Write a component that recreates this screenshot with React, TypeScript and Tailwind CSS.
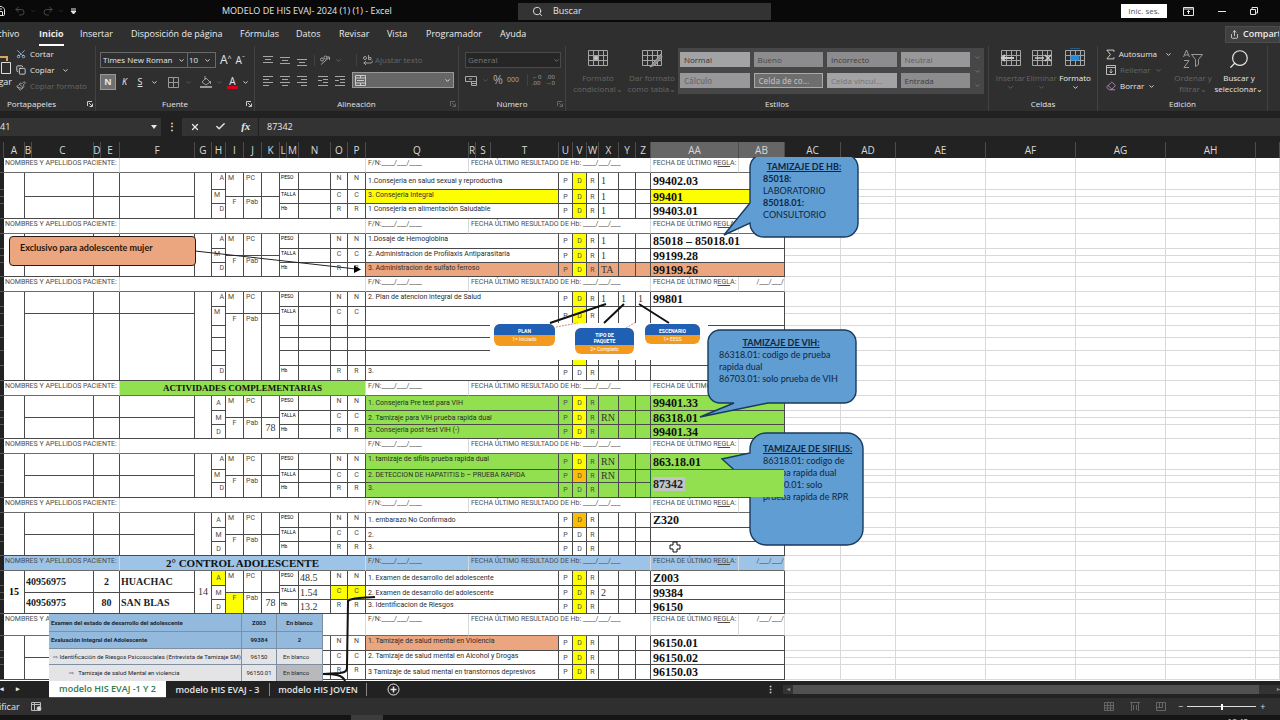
import type { ReactNode } from "react";
import { ChevronDown, Copy, Eraser, Paintbrush, Redo2, Scissors, Search, Share, Undo2, X, Check, Save } from "lucide-react";

type Line = {
  span: number;
  text?: string;
  top?: boolean;
  bg?: string;
  textBg?: string;
  pdr?: boolean;
  dBg?: string;
  x?: string;
  y?: string;
  z?: string;
  code?: string;
  amd?: string;
  measure?: string;
  value?: string;
  ncr?: string;
  amdBg?: string;
  ncrBg?: string;
};

type Block = {
  head: number;
  title?: string;
  titleBg?: string;
  headBg?: string;
  regla?: boolean;
  loose?: boolean;
  heights: number[];
  split: [number, number];
  lines: Line[];
  no?: string;
  age?: string;
  dni?: string[];
  num?: string[];
  name?: string[];
  pab?: string;
  sexBg?: string;
};

const YELLOW = "bg-[#fdff00]";
const GREEN = "bg-[#92df50]";
const PEACH = "bg-[#eba67f]";
const BLUE = "bg-[#9dc3e6]";
const ORANGE = "bg-[#fbbd08]";

const AMD = [
  { amd: "A", measure: "PESO", ncr: "N" },
  { amd: "M", measure: "TALLA", ncr: "C" },
  { amd: "D", measure: "Hb", ncr: "R" },
];

const three = (lines: Omit<Line, "span">[]): Line[] =>
  lines.map((l, i) => ({ span: i === 1 ? 2 : 1, pdr: true, dBg: YELLOW, ...AMD[i], ...l }));

const BLOCKS: Block[] = [
  {
    head: 15, loose: true, heights: [17, 7, 7, 15], split: [2, 2],
    lines: three([
      { text: "1.Consejeria en salud sexual y reproductiva", x: "1", code: "99402.03" },
      { text: "3. Consejeria Integral", top: true, textBg: YELLOW, x: "1", code: "99401" },
      { text: "1 Consejeria en alimentación Saludable", top: true, x: "1", code: "99403.01" },
    ]),
  },
  {
    head: 15, loose: true, heights: [15, 7, 7, 14], split: [2, 2],
    lines: three([
      { text: "1.Dosaje de Hemoglobina", top: true, x: "1", code: "85018 – 85018.01" },
      { text: "2. Administracion de Profilaxis Antiparasitaria", top: true, x: "1", code: "99199.28" },
      { text: "3. Administracion de sulfato ferroso", top: true, bg: PEACH, x: "TA", code: "99199.26" },
    ]),
  },
  {
    head: 15, loose: true, regla: true, heights: [15, 7, 12, 12, 13, 15, 15], split: [2, 5],
    lines: [
      { span: 1, ...AMD[0], text: "2. Plan de atencion integral de Salud", top: true, pdr: true, dBg: YELLOW, x: "1", y: "1", z: "1", code: "99801" },
      { span: 2, ...AMD[1], pdr: true, dBg: YELLOW },
      { span: 1, dBg: YELLOW },
      { span: 1, dBg: YELLOW },
      { span: 1, dBg: YELLOW },
      { span: 1, ...AMD[2], text: "3.", top: true, pdr: true },
    ],
  },
  {
    head: 15, title: "ACTIVIDADES COMPLEMENTARIAS", titleBg: GREEN, heights: [15, 7, 7, 14], split: [2, 2], pab: "78",
    lines: three([
      { text: "1. Consejeria Pre test para VIH", bg: GREEN, code: "99401.33" },
      { text: "2. Tamizaje para VIH prueba rapida dual", bg: GREEN, x: "RN", code: "86318.01" },
      { text: "3. Consejeria post test VIH (-)", top: true, bg: GREEN, code: "99401.34" },
    ]),
  },
  {
    head: 15, loose: true, heights: [16, 6, 7, 15], split: [2, 2],
    lines: three([
      { text: "1. tamizaje de sifilis prueba rapida dual", top: true, bg: GREEN, x: "RN", code: "863.18.01" },
      { text: "2. DETECCION DE HAPATITIS b – PRUEBA RAPIDA", top: true, bg: GREEN, dBg: ORANGE, x: "RN" },
      { text: "3.", top: true, bg: GREEN, dBg: GREEN },
    ]),
  },
  {
    head: 15, heights: [15, 7, 7, 14], split: [2, 2],
    lines: three([
      { text: "1. embarazo No Confirmado", dBg: ORANGE, code: "Z320" },
      { text: "2.", dBg: "" },
      { text: "3.", top: true, dBg: "" },
    ]),
  },
  {
    head: 15, title: "2° CONTROL ADOLESCENTE", headBg: BLUE, regla: true, heights: [15, 7, 7, 14], split: [2, 2],
    no: "15", age: "14", dni: ["40956975", "40956975"], num: ["2", "80"], name: ["HUACHAC", "SAN BLAS"], pab: "78", sexBg: YELLOW,
    lines: three([
      { text: "1. Examen de desarrollo del adolescente", value: "48.5", amdBg: YELLOW, code: "Z003" },
      { text: "2. Examen de desarrollo del adolescente", value: "1.54", ncrBg: YELLOW, x: "2", code: "99384" },
      { text: "3. Identificacion de Riesgos", top: true, value: "13.2", code: "96150" },
    ]),
  },
  {
    head: 22, loose: true, regla: true, heights: [15, 7, 7, 15], split: [2, 2],
    lines: three([
      { text: "1. Tamizaje de salud mental en Violencia", top: true, textBg: PEACH, code: "96150.01" },
      { text: "2. Tamizaje de salud mental en Alcohol y Drogas", top: true, code: "96150.02" },
      { text: "3 Tamizaje de salud mental en transtornos depresivos", code: "96150.03" },
    ]),
  },
];

const COLS: [string, string][] = [
  ["", "w-[4px]"], ["A", "w-[21px]"], ["B", "w-[7px]"], ["C", "w-[62px]"], ["D", "w-[7px]"], ["E", "w-[19px]"],
  ["F", "w-[75px]"], ["G", "w-[17px]"], ["H", "w-[14px]"], ["I", "w-[18px]"], ["J", "w-[18px]"], ["K", "w-[18px]"],
  ["L", "w-[7px]"], ["M", "w-[12px]"], ["N", "w-[32px]"], ["O", "w-[17px]"], ["P", "w-[18px]"], ["Q", "w-[103px]"],
  ["R", "w-[7px]"], ["S", "w-[15px]"], ["T", "w-[68px]"], ["U", "w-[14px]"], ["V", "w-[14px]"], ["W", "w-[12px]"],
  ["X", "w-[20px]"], ["Y", "w-[17px]"], ["Z", "w-[15px]"], ["AA", "w-[88px]"], ["AB", "w-[46px]"], ["AC", "w-[56px]"],
  ["AD", "w-[55px]"], ["AE", "w-[90px]"], ["AF", "w-[90px]"], ["AG", "w-[90px]"], ["AH", "w-[90px]"], ["", ""],
];

const CELL = "border-r border-b border-[#4a4a4a] p-0 overflow-hidden whitespace-nowrap";
const SOFT = "border-b border-b-[#6b6b6b] border-r border-r-[#d9d9d9] p-0 overflow-hidden whitespace-nowrap align-top text-[7px] leading-[10px]";
const TINY = "text-[7px] leading-[10px] text-[#4c4c4c]";
const SERIF = "font-['Liberation_Serif',serif]";

function EmptyCells() {
  return (
    <>
      {["AC", "AD", "AE", "AF", "AG", "AH", "AI"].map((c) => (
        <td key={c} className="border-r border-b border-[#d9d9d9] p-0" />
      ))}
    </>
  );
}

function RowHead() {
  return <td className="border-b border-[#555] bg-[#222] p-0" />;
}

function BlockRows({ b }: { b: Block }) {
  const starts: number[] = [];
  b.lines.reduce((at, l) => {
    starts.push(at);
    return at + l.span;
  }, 0);
  const head = `${SOFT} ${b.headBg ?? ""} text-[#4c4c4c]`;

  return (
    <>
      <tr style={{ height: b.head }}>
        <RowHead />
        <td colSpan={5} className={`${head} pl-px`}>NOMBRES Y APELLIDOS PACIENTE:</td>
        <td colSpan={11} className={`${SOFT} ${b.headBg ?? ""} ${b.titleBg ?? ""} ${SERIF} text-center`}>
          {b.title && <span className={`block font-bold leading-[14px] text-[#111] ${b.headBg ? "text-[11px]" : "text-[9px]"}`}>{b.title}</span>}
        </td>
        <td className={`${head} pl-0.5`}>F/N:____/___/____</td>
        <td colSpan={9} className={`${head} pl-0.5`}>FECHA ÚLTIMO RESULTADO DE Hb: ____/___/___</td>
        <td className={`${head} pl-0.5`}>FECHA DE ÚLTIMO R<u>EGL</u>A:</td>
        <td className={`${head} border-r-[#4a4a4a] text-right`}>{b.regla ? "/___/___/" : ""}</td>
        <EmptyCells />
      </tr>
      {b.heights.map((h, r) => {
        const i = starts.indexOf(r);
        const l = i >= 0 ? b.lines[i] : null;
        const half = r === 0 ? 0 : r === b.split[0] ? 1 : -1;
        const hs = half >= 0 ? b.split[half] : 1;
        const bg = l?.bg ?? "";
        const amdAlign = !b.loose ? "text-center" : l?.amd === "M" ? "pl-0.5 align-top" : "pr-px text-right align-top";
        return (
          <tr key={r} style={{ height: h }}>
            <RowHead />
            {r === 0 && <td rowSpan={b.heights.length} className={`${CELL} ${SERIF} text-center text-[10px] leading-3 font-bold`}>{b.no}</td>}
            {half >= 0 && (
              <>
                <td colSpan={2} rowSpan={hs} className={`${CELL} ${SERIF} pl-px text-[10px] leading-3 font-bold text-[#222]`}>{b.dni?.[half]}</td>
                <td colSpan={2} rowSpan={hs} className={`${CELL} ${SERIF} text-center text-[10px] leading-3 font-bold text-[#222]`}>{b.num?.[half]}</td>
                <td rowSpan={hs} className={`${CELL} ${SERIF} pl-px text-[10px] leading-3 font-bold text-[#222]`}>{b.name?.[half]}</td>
              </>
            )}
            {r === 0 && <td rowSpan={b.heights.length} className={`${CELL} ${SERIF} text-center text-[10px] leading-3 text-[#333]`}>{b.age}</td>}
            {l && <td rowSpan={l.span} className={`${CELL} ${TINY} ${l.amdBg ?? ""} ${amdAlign}`}>{l.amd}</td>}
            {half >= 0 && (
              <>
                <td rowSpan={hs} className={`${CELL} ${TINY} align-top ${half ? `text-center ${b.sexBg ?? ""}` : "pl-0.5"}`}>{half ? "F" : "M"}</td>
                <td rowSpan={hs} className={`${CELL} ${TINY} pl-0.5 align-top`}>{half ? "Pab" : "PC"}</td>
                <td rowSpan={hs} className={`${CELL} ${SERIF} text-center text-[10px] leading-3 text-[#333]`}>{half ? b.pab : ""}</td>
              </>
            )}
            {l && (
              <>
                <td colSpan={2} rowSpan={l.span} className={`${CELL} pl-px align-top text-[5px] leading-[8px]`}>{l.measure}</td>
                <td rowSpan={l.span} className={`${CELL} ${SERIF} pl-px text-[10px] leading-3 text-[#333]`}>{l.value}</td>
                <td rowSpan={l.span} className={`${CELL} ${TINY} ${l.ncrBg ?? ""} text-center align-top`}>{l.ncr}</td>
                <td rowSpan={l.span} className={`${CELL} ${TINY} ${l.ncrBg ?? ""} text-center align-top`}>{l.ncr}</td>
                <td colSpan={4} rowSpan={l.span} className={`${CELL} ${bg} ${l.textBg ?? ""} pl-0.5 text-[7px] leading-[10px] text-[#2c2c2c] ${l.top ? "align-top" : ""}`}>{l.text}</td>
                <td rowSpan={l.span} className={`${CELL} ${TINY} ${bg} text-center`}>{l.pdr ? "P" : ""}</td>
                <td rowSpan={l.span} className={`${CELL} ${TINY} ${l.dBg ?? ""} text-center`}>{l.pdr ? "D" : ""}</td>
                <td rowSpan={l.span} className={`${CELL} ${TINY} ${bg} text-center`}>{l.pdr ? "R" : ""}</td>
                {[l.x, l.y, l.z].map((v, k) => (
                  <td key={k} rowSpan={l.span} className={`${CELL} ${SERIF} ${bg} pl-0.5 text-[10px] leading-3 text-[#333]`}>{v}</td>
                ))}
                <td colSpan={2} rowSpan={l.span} className={`${CELL} ${SERIF} ${bg} ${l.textBg === YELLOW ? YELLOW : ""} pl-0.5 text-[12px] leading-3 font-bold text-[#111]`}>{l.code}</td>
              </>
            )}
            <EmptyCells />
          </tr>
        );
      })}
    </>
  );
}

function Pill({ place, title, note }: { place: string; title: string; note: string }) {
  return (
    <div className={`absolute overflow-hidden rounded-md bg-[#f39a1e] text-center text-[5px] leading-[6px] text-white ${place}`}>
      <div className="bg-[#1f5fb4] px-3 pt-1 pb-px font-bold">{title}</div>
      <div className="pt-px">{note}</div>
    </div>
  );
}

function Overlays() {
  return (
    <div className="absolute inset-x-0 top-[15px] bottom-0 overflow-hidden">
      <svg className="absolute top-0 left-0 h-[524px] w-[1280px]" viewBox="0 157 1280 524" fill="none">
        <path d="M195 251L356 269" stroke="#222" />
        <path d="M354 265.500l7 4-7 3.500z" fill="#000" />
        <rect x="490" y="323" width="218" height="37" fill="#fff" />
        <path d="M606 304l-56 19M624 304l-20 19M639 304l30 19" stroke="#111" strokeWidth="2" />
        <path d="M556 327l22-4M626 328l10-6" stroke="#b55" strokeDasharray="2 1" strokeWidth=".7" />
        <g fill="#5f9dd2" stroke="#173a5e" strokeWidth="1.400">
          <path d="M764 154h80a14 14 0 0 1 14 14v55a14 14 0 0 1-14 14h-80a14 14 0 0 1-14-14L724 235l26-32v-35a14 14 0 0 1 14-14z" />
          <path d="M720 330h124a12 12 0 0 1 12 12v49a12 12 0 0 1-12 12h-76L700 417l34-14h-14a12 12 0 0 1-12-12v-49a12 12 0 0 1 12-12z" />
          <path d="M766 433h81a16 16 0 0 1 16 16v80a16 16 0 0 1-16 16h-81a16 16 0 0 1-16-16v-45L722 459l28-6v-4a16 16 0 0 1 16-16z" />
        </g>
        <path d="M375 597c-10 1-23 0-27 4l-1 66c0 4-1 5-7 6l-17 1c12 0 20 1 22 7" stroke="#111" strokeWidth="2" />
        <path d="M673 542h4v3h3v4h-3v3h-4v-3h-3v-4h3z" fill="#fff" stroke="#111" />
      </svg>

      <div className="absolute top-[79px] left-[9px] h-[30px] w-[187px] rounded border border-[#2a1a12] bg-[#eba67f] px-2.5 pt-1 font-['Lato',sans-serif] text-[9px] leading-[13px] font-bold text-[#2a1508]">
        Exclusivo para adolescente mujer
      </div>

      <Pill place="top-[167px] left-[494px] w-[61px] h-[22px]" title="PLAN" note="1= Iniciado" />
      <Pill place="top-[171px] left-[575px] w-[59px] h-[26px]" title="TIPO DE PAQUETE" note="2= Completo" />
      <Pill place="top-[167px] left-[645px] w-[55px] h-[20px]" title="ESCENARIO" note="1= EESS" />

      <div className="absolute top-1 left-[763px] w-[82px] font-['Lato',sans-serif] text-[9px] leading-3 text-[#10263d]">
        <h3 className="text-center font-bold underline">TAMIZAJE DE HB:</h3>
        <p className="font-bold">85018:</p>
        <p>LABORATORIO</p>
        <p className="font-bold">85018.01:</p>
        <p>CONSULTORIO</p>
      </div>
      <div className="absolute top-[180px] left-[719px] w-[124px] font-['Lato',sans-serif] text-[9px] leading-3 text-[#10263d]">
        <h3 className="text-center font-bold underline">TAMIZAJE DE VIH:</h3>
        <p>86318.01: codigo de prueba</p>
        <p>rapida dual</p>
        <p>86703.01: solo prueba de VIH</p>
      </div>
      <div className="absolute top-[286px] left-[763px] w-[86px] font-['Lato',sans-serif] text-[9px] leading-3 whitespace-nowrap text-[#10263d]">
        <h3 className="text-center font-bold underline">TAMIZAJE DE SIFILIS:</h3>
        <p>86318.01: codigo de</p>
        <p>prueba rapida dual</p>
        <p>86780.01: solo</p>
        <p>prueba rapida de RPR</p>
      </div>

      {/* cell being edited */}
      <div className="absolute top-[312px] left-[650px] flex h-[28px] w-[134px] items-center border-t border-l border-[#1d6f3f] bg-[#92df50] pl-0.5">
        <input aria-label="AA41" defaultValue="87342" className="w-[32px] bg-[#c4c4c4] p-0 font-['Liberation_Serif',serif] text-[12px] leading-[14px] font-bold text-[#222]" />
      </div>

      <table className="absolute top-[457px] left-[49px] w-[274px] table-fixed border-separate border-spacing-0 font-['Roboto',sans-serif] text-[6px] leading-[8px] text-[#1c2733]">
        <colgroup>
          <col className="w-[193px]" />
          <col className="w-[35px]" />
          <col className="w-[46px]" />
        </colgroup>
        <tbody className="[&_td]:border-r [&_td]:border-b [&_td]:border-[#7d8fa3] [&_td]:p-0 [&_td]:whitespace-nowrap">
          <tr className="h-[18px] bg-[#93b9dc] font-bold">
            <td><span className="pl-0.5">Examen del estado de desarrollo del adolescente</span></td>
            <td className="text-center">Z003</td>
            <td className="text-center">En blanco</td>
          </tr>
          <tr className="h-[17px] bg-[#93b9dc] font-bold">
            <td><span className="pl-0.5">Evaluación Integral del Adolescente</span></td>
            <td className="text-center">99384</td>
            <td className="text-center">2</td>
          </tr>
          <tr className="h-[16px] bg-[#e4e4e6]">
            <td><span className="pl-1">⇨ Identificación de Riesgos Psicosociales (Entrevista de Tamizaje SM)</span></td>
            <td className="text-center">96150</td>
            <td><span className="pl-1.5">En blanco</span></td>
          </tr>
          <tr className="h-[17px] bg-[#e4e4e6]">
            <td><span className="pl-5">⇨ &nbsp; Tamizaje de salud Mental en violencia</span></td>
            <td className="text-center">96150.01</td>
            <td className="bg-[#b9b9bb]"><span className="pl-1.5">En blanco</span></td>
          </tr>
        </tbody>
      </table>
    </div>
  );
}

function Sheet() {
  return (
    <main className="relative min-h-0 flex-1 overflow-hidden bg-white font-['Roboto',sans-serif]">
      <table className="w-full table-fixed border-separate border-spacing-0">
        <colgroup>
          {COLS.map(([, w], i) => <col key={i} className={w} />)}
        </colgroup>
        <thead>
          <tr className="h-[16px] bg-[#222] font-['Open_Sans',sans-serif] text-[10px] leading-[15px] text-[#d8d8d8]">
            {COLS.map(([name], i) => (
              <th key={i} className={`border-r border-[#4c4c4c] p-0 font-normal ${name === "AA" || name === "AB" ? "bg-[#666]" : ""}`}>
                <span className="-mx-1 block">{name}</span>
              </th>
            ))}
          </tr>
        </thead>
        <tbody>
          {BLOCKS.map((b, i) => <BlockRows key={i} b={b} />)}
        </tbody>
      </table>
      <Overlays />
    </main>
  );
}

function TitleBar() {
  return (
    <header className="flex h-[22px] shrink-0 items-center bg-[#090909] text-[9px] text-[#e6e6e6]">
      <div className="flex w-[222px] items-center">
        <button aria-label="Guardar" className="-ml-1.5"><Save size={12} /></button>
        <button aria-label="Deshacer" className="ml-2 flex items-center gap-1 text-[#4a4a4a]"><Undo2 size={12} /><ChevronDown size={6} /></button>
        <button aria-label="Rehacer" className="ml-1.5 flex items-center gap-1 text-[#4a4a4a]"><Redo2 size={12} /><ChevronDown size={6} /></button>
        <button aria-label="Personalizar" className="ml-1.5">
          <svg width="7" height="7" viewBox="0 0 7 7"><path d="M1 1h5M1 3l2.500 3L6 3z" stroke="currentColor" fill="currentColor" /></svg>
        </button>
      </div>
      <h1 className="w-[296px] font-medium whitespace-nowrap">MODELO DE HIS EVAJ- 2024 (1) (1) - Excel</h1>
      <label className="flex h-[17px] w-[253px] items-center gap-2.5 bg-[#333] pl-3.5">
        <Search size={11} />
        <input aria-label="Buscar" placeholder="Buscar" className="w-40 bg-transparent font-medium placeholder:text-[#e6e6e6]" />
      </label>
      <div className="ml-auto flex items-center">
        <button className="h-[14px] w-[46px] bg-white text-[8px] leading-3 text-[#555]">Inic. ses.</button>
        <button aria-label="Opciones de cinta" className="ml-4">
          <svg width="11" height="9" viewBox="0 0 11 9" fill="none" stroke="currentColor"><path d="M.5.5h10v8H.5zM.5 2h10M5.500 7V3.500M4 5l1.500-1.500L7 5" /></svg>
        </button>
        <button aria-label="Minimizar" className="ml-6"><svg width="8" height="8" viewBox="0 0 8 8"><path d="M0 4.500h8" stroke="currentColor" /></svg></button>
        <button aria-label="Restaurar" className="ml-6"><svg width="8" height="8" viewBox="0 0 8 8" fill="none" stroke="currentColor"><path d="M.5 2.500h5v5h-5zM2 2.500v-2h5.500V6h-2" /></svg></button>
        <button aria-label="Cerrar" className="ml-5 w-0.5 overflow-hidden"><X size={10} /></button>
      </div>
    </header>
  );
}

const TABS: [string, string][] = [
  ["Insertar", "w-[51px]"], ["Disposición de página", "w-[109px]"], ["Fórmulas", "w-[56px]"], ["Datos", "w-[43px]"],
  ["Revisar", "w-[48px]"], ["Vista", "w-[39px]"], ["Programador", "w-[74px]"], ["Ayuda", "w-[40px]"],
];

function Tabs() {
  return (
    <nav className="flex h-[24px] shrink-0 items-center bg-[#2f2f2f] text-[9px] text-[#ececec]">
      <div className="flex flex-1 items-center">
        <button className="-ml-3 w-[51px] text-left font-medium">Archivo</button>
        <button className="w-[41px] text-left font-bold"><span className="border-b-2 border-white pb-1">Inicio</span></button>
        {TABS.map(([name, w]) => (
          <button key={name} className={`text-left font-medium whitespace-nowrap ${w}`}>{name}</button>
        ))}
      </div>
      <button className="flex h-[17px] w-[55px] items-center gap-1 overflow-hidden border border-[#4c4c4c] bg-[#404040] pl-1 font-semibold whitespace-nowrap">
        <Share size={9} className="shrink-0" />Compartir
      </button>
    </nav>
  );
}

function Group({ label, width, children, launcher, dim }: { label: string; width: string; children: ReactNode; launcher?: boolean; dim?: boolean }) {
  return (
    <section className={`relative flex shrink-0 flex-col border-r border-[#424242] ${width}`}>
      <div className="flex-1">{children}</div>
      <h2 className="h-[14px] text-center text-[8px] leading-[14px] font-medium text-[#e4e4e4]">{label}</h2>
      {launcher && (
        <button aria-label={`Opciones de ${label}`} className={`absolute right-[2px] bottom-[4px] ${dim ? "text-[#666]" : "text-[#ccc]"}`}>
          <svg width="6" height="6" viewBox="0 0 6 6" fill="none" stroke="currentColor"><path d="M.5 5V.5H5M2 2l3 3M5.500 2.500v3h-3" /></svg>
        </button>
      )}
    </section>
  );
}

// horizontal rules, each given as [x, y, length]
function Rules({ label, rules, gap = "" }: { label: string; rules: [number, number, number][]; gap?: string }) {
  return (
    <button aria-label={label} className={gap}>
      <svg width="11" height="11" viewBox="0 0 11 11" stroke="#a6a6a6">
        {rules.map(([x, y, n]) => <path key={y} d={`M${x} ${y + 0.5}h${n}`} />)}
      </svg>
    </button>
  );
}

function GridIcon({ children }: { children?: ReactNode }) {
  return (
    <svg width="22" height="20" viewBox="0 0 22 20" fill="none" stroke="#a5a5a5">
      <path d="M1.500 2.500h19v15h-19zM1.500 7.500h19M1.500 12.500h19M6.500 2.500v15M11.500 2.500v15M16.500 2.500v15" />
      {children}
    </svg>
  );
}

function Caret({ className = "" }: { className?: string }) {
  return <ChevronDown size={7} strokeWidth={3} className={`shrink-0 ${className}`} />;
}

const STYLES: [string, string][] = [
  ["Normal", "bg-[#a3a3a5] text-[#333]"], ["Bueno", "bg-[#8c8c8e] text-[#4a4a4a]"], ["Incorrecto", "bg-[#8c8c8e] text-[#3c3c3c]"], ["Neutral", "bg-[#98989a] text-[#5c5c5c]"],
  ["Cálculo", "bg-[#98989a] text-[#6c6c6c] font-semibold"], ["Celda de co...", "bg-[#6e6e6e] text-[#b5b5b5] font-semibold border border-[#aaa]"], ["Celda vincul...", "bg-[#a3a3a5] text-[#747474]"], ["Entrada", "bg-[#8c8c8e] text-[#3c3c3c]"],
];

function Ribbon() {
  return (
    <div className="flex h-[65px] shrink-0 bg-[#2f2f2f] text-[8px] leading-3 text-[#e6e6e6]">
      <Group label="Portapapeles" width="-ml-8 w-[128px]" launcher>
        <div className="flex pl-8">
          <button className="mr-0.5 w-[14px] shrink-0 overflow-hidden pt-1 text-[9px]">
            <svg width="14" height="20" viewBox="0 0 14 20" fill="none"><path d="M0 3h7v4" stroke="#d9a55b" strokeWidth="2" /><path d="M1.500 8.500h9v11h-9z" stroke="#ddd" /></svg>
            <span className="-ml-3.5 block pt-0.5">Pegar</span>
          </button>
          <div className="flex flex-col gap-1 pt-0.5 whitespace-nowrap">
            <button className="flex items-center gap-1 font-medium"><Scissors size={10} className="-rotate-90 text-[#9cc6e6]" />Cortar</button>
            <button className="flex items-center gap-1 font-medium"><Copy size={10} />Copiar<Caret className="ml-1" /></button>
            <button className="flex items-center gap-1 text-[#666]"><Paintbrush size={10} className="text-[#b0b0b0]" />Copiar formato</button>
          </div>
        </div>
      </Group>

      <Group label="Fuente" width="w-[159px]" launcher>
        <div className="flex items-center gap-1 pt-1.5 pl-1">
          <div className="flex h-[16px] w-[116px] border border-[#6a6a6a]">
            <select aria-label="Fuente" className="w-[87px] appearance-none border-r border-[#6a6a6a] bg-transparent pl-0.5"><option>Times New Roman</option></select>
            <Caret className="-ml-2.5 self-center" />
            <select aria-label="Tamaño" className="w-[27px] appearance-none bg-transparent pl-1"><option>10</option></select>
            <Caret className="-ml-2 self-center" />
          </div>
          <button aria-label="Aumentar" className="text-[12px]">A<sup className="text-[7px]">^</sup></button>
          <button aria-label="Reducir" className="text-[10px]">A<sup className="text-[7px]">ˇ</sup></button>
        </div>
        <div className="flex items-center pt-1.5 pl-1">
          <button className="h-[16px] w-[16px] border border-[#999] bg-[#707070] text-[9px] font-bold">N</button>
          <button className="w-[17px] text-[9px] italic">K</button>
          <button className="w-[14px] text-[9px] underline">S</button>
          <Caret className="ml-1" />
          <button aria-label="Bordes" className="ml-2.5 flex items-center gap-1.5 text-[#999]">
            <svg width="11" height="11" viewBox="0 0 11 11" fill="none" stroke="currentColor"><path d="M.5.5h10v10H.5zM5.500.5v10M.5 5.500h10" /></svg>
            <Caret className="text-[#5b5b5b]" />
          </button>
          <button aria-label="Relleno" className="ml-2 flex items-center gap-1 text-[#999]">
            <svg width="12" height="12" viewBox="0 0 12 12" fill="none" stroke="currentColor"><path d="M2 6l4-4 4 4-4 3zM5 0v4M10.500 5v3" /><path d="M0 11h12" strokeWidth="2" /></svg>
            <Caret className="text-[#5b5b5b]" />
          </button>
          <button aria-label="Color de fuente" className="ml-1 flex items-center gap-1">
            <span className="block w-[11px] border-b-[3px] border-[#d4001c] text-[10px] leading-[10px]">A</span>
            <Caret />
          </button>
        </div>
      </Group>

      <Group label="Alineación" width="w-[204px]" launcher dim>
        <div className="flex items-center gap-1.5 pt-2 pl-2">
          <Rules label="Superior" rules={[[0, 1, 10], [2, 4, 6], [0, 7, 10]]} />
          <Rules label="Medio" rules={[[0, 2, 10], [2, 5, 6], [0, 8, 10]]} />
          <Rules label="Inferior" rules={[[0, 4, 10], [2, 7, 6], [0, 10, 10]]} />
          <button aria-label="Orientación" className="flex items-center gap-1 border-l border-[#424242] pl-1 text-[#a0a0a0]">
            <svg width="12" height="11" viewBox="0 0 12 11" fill="none" stroke="currentColor"><path d="M2 9.500l8-7M7.500 2H10.500V5" /><circle cx="3" cy="4.500" r="1.500" /><circle cx="6.500" cy="2.500" r="1.500" /></svg>
            <Caret className="text-[#666]" />
          </button>
          <button className="ml-2 flex items-center gap-0.5 border-l border-[#424242] pl-1.5 whitespace-nowrap text-[#666]">
            <svg width="10" height="11" viewBox="0 0 10 11" fill="none" stroke="#a0a0a0"><circle cx="2" cy="3" r="1.500" /><path d="M5.500 0v4.500H8V2.500H5.500M.5 8h7.500a1.500 1.500 0 0 0 1-2.500M3 6L1 8l2 2" /></svg>
            Ajustar texto
          </button>
        </div>
        <div className="flex items-center gap-1.5 pt-1.5 pl-2">
          <Rules label="Izquierda" rules={[[0, 1, 10], [0, 4, 6], [0, 7, 10], [0, 10, 6]]} />
          <Rules label="Centro" rules={[[0, 1, 10], [2, 4, 6], [0, 7, 10], [2, 10, 6]]} />
          <Rules label="Derecha" rules={[[0, 1, 10], [4, 4, 6], [0, 7, 10], [4, 10, 6]]} />
          <Rules label="Disminuir sangría" gap="ml-1" rules={[[0, 1, 10], [5, 4, 5], [0, 5, 4], [5, 7, 5], [0, 10, 10]]} />
          <Rules label="Aumentar sangría" rules={[[0, 1, 10], [5, 4, 5], [0, 5, 4], [5, 7, 5], [0, 10, 10]]} />
          <button aria-label="Combinar y centrar" className="flex h-[16px] w-[102px] items-center justify-between border border-[#999] bg-[#666] px-0.5">
            <svg width="11" height="11" viewBox="0 0 11 11" fill="none" stroke="#ccc"><path d="M.5.5h10v10H.5zM.5 3h10M.5 8h10M2 5.500h7M5.500 0v3M5.500 8v3" /></svg>
            <Caret />
          </button>
        </div>
      </Group>

      <Group label="Número" width="w-[107px]" launcher dim>
        <div className="pt-1.5 pl-1.5">
          <label className="flex h-[16px] w-[96px] items-center border border-[#4a4a4a] bg-[#262626] text-[#777]">
            <select aria-label="Formato de número" className="flex-1 appearance-none pl-0.5"><option>General</option></select>
            <Caret />
          </label>
        </div>
        <div className="flex items-center pt-1.5 pl-1.5 text-[#a9a9a9]">
          <button aria-label="Moneda" className="flex items-center gap-1">
            <svg width="13" height="11" viewBox="0 0 13 11" fill="none" stroke="currentColor"><path d="M.5 1.500h11v5H.5zM4 4h3M6.500 6.500h5v4h-5zM6.500 8.500h5" /></svg>
            <Caret className="text-[#5b5b5b]" />
          </button>
          <button className="ml-1 text-[12px]">%</button>
          <button className="ml-1 text-[7px]">000</button>
          <button className="ml-2 border-l border-[#424242] pl-1 text-left text-[6px] leading-[6px]">←0<br />.00</button>
          <button className="ml-1 text-right text-[6px] leading-[6px]">.00<br />→0</button>
        </div>
      </Group>

      <Group label="Estilos" width="w-[423px]">
        <div className="flex pt-0.5 pl-1 text-center text-[#666]">
          <button className="flex w-[56px] flex-col items-center whitespace-nowrap">
            <GridIcon><path d="M7 8h4v4H7z" fill="#ccc" /></GridIcon>
            <span className="pt-1 leading-[11px]">Formato<br />condicional⌄</span>
          </button>
          <button className="flex w-[52px] flex-col items-center whitespace-nowrap">
            <GridIcon><path d="M20 6l-7 8-4 5 5-2 7-8z" fill="#888" /></GridIcon>
            <span className="pt-1 leading-[11px]">Dar formato<br />como tabla⌄</span>
          </button>
          <div className="flex gap-1 bg-[#474747] p-0.5">
            <div className="grid w-[290px] grid-cols-4 gap-x-1 gap-y-1 py-0.5">
              {STYLES.map(([name, look]) => (
                <button key={name} className={`h-[15px] pl-1 text-left leading-[13px] whitespace-nowrap ${look}`}>{name}</button>
              ))}
            </div>
            <div className="flex w-[8px] flex-col justify-around text-[#777]"><Caret /><Caret /><Caret /></div>
          </div>
        </div>
      </Group>

      <Group label="Celdas" width="w-[109px]">
        <div className="flex pt-0.5 pl-1.5 text-[#666]">
          <button className="flex w-[31px] flex-col items-center"><GridIcon><path d="M14 10H2M5 7l-3 3 3 3" stroke="#ccc" strokeWidth="2" /></GridIcon><span className="pt-1">Insertar</span><Caret /></button>
          <button className="flex w-[31px] flex-col items-center"><GridIcon><path d="M14 7l6 6M20 7l-6 6M4 10h9" stroke="#ccc" strokeWidth="1.500" /></GridIcon><span className="pt-1">Eliminar</span><Caret /></button>
          <button className="flex w-[36px] flex-col items-center text-[#ececec]"><GridIcon><path d="M7 8h8v4H7zM6 0h10" fill="#1f8ae0" stroke="#1f8ae0" /></GridIcon><span className="pt-1 font-medium">Formato</span><Caret /></button>
        </div>
      </Group>

      <Group label="Edición" width="w-[170px]">
        <div className="flex pt-0.5 pl-2">
          <div className="flex w-[66px] flex-col gap-1 whitespace-nowrap">
            <button className="flex items-center gap-1 font-medium">
              <svg width="10" height="11" viewBox="0 0 10 11" fill="none" stroke="#ddd"><path d="M9 2.500V.5H1l4 5-4 5h8v-2" /></svg>Autosuma<Caret className="ml-1" />
            </button>
            <button className="flex items-center gap-1 text-[#666]">
              <svg width="10" height="10" viewBox="0 0 10 10" fill="none" stroke="#bbb"><path d="M.5.5h9v9h-9zM.5 2.500h9M5 4v4M3.500 6.500L5 8l1.500-1.500" /></svg>Rellenar<Caret />
            </button>
            <button className="flex items-center gap-1 font-medium"><Eraser size={10} className="text-[#c58bd0]" />Borrar<Caret /></button>
          </div>
          <button className="flex w-[42px] flex-col items-center whitespace-nowrap text-[#666]">
            <svg width="22" height="22" viewBox="0 0 22 22" fill="none" stroke="#9a9a9a"><path d="M1.500 9L4.500 2l3 7M2.500 7h4M2 12.500h5L2 19.500h5M9.500 6.500h11l-4 5v5l-3 2v-7z" /></svg>
            <span className="pt-0.5 leading-[11px]">Ordenar y<br />filtrar⌄</span>
          </button>
          <button className="flex w-[50px] flex-col items-center font-medium whitespace-nowrap">
            <Search size={22} strokeWidth={1.3} className="-scale-x-100" />
            <span className="pt-0.5 leading-[11px]">Buscar y<br />seleccionar⌄</span>
          </button>
        </div>
      </Group>
    </div>
  );
}

function FormulaBar() {
  return (
    <div className="flex h-[31px] shrink-0 items-center bg-[#212121] text-[9px] text-[#e6e6e6]">
      <label className="flex h-[18px] w-[161px] items-center justify-between bg-[#333] pr-1">
        <input aria-label="Cuadro de nombres" defaultValue="41" className="w-20 bg-transparent font-medium" />
        <svg width="6" height="4" viewBox="0 0 6 4"><path d="M0 0h6L3 4z" fill="currentColor" /></svg>
      </label>
      <span className="w-[21px] text-center text-[10px] font-bold">⋮</span>
      <div className="flex h-[18px] w-[76px] items-center justify-around bg-[#333]">
        <button aria-label="Cancelar"><X size={10} strokeWidth={3} /></button>
        <button aria-label="Introducir"><Check size={11} strokeWidth={3} /></button>
        <button aria-label="Insertar función" className="font-['Liberation_Serif',serif] text-[11px] font-bold italic">fx</button>
      </div>
      <input aria-label="Barra de fórmulas" defaultValue="87342" className="ml-px h-[18px] flex-1 bg-[#333] pl-2 font-medium" />
    </div>
  );
}

function Footer() {
  return (
    <footer className="shrink-0">
      <div className="flex h-[17px] items-center bg-[#222] text-[9px] font-semibold text-[#e6e6e6]">
        <div className="flex w-[49px] gap-3 text-[7px]"><span>◂</span><span>▸</span></div>
        <button className="h-[17px] w-[117px] border-b border-[#1d6f3f] bg-white text-[#2f7a4c]">modelo HIS EVAJ -1 Y 2</button>
        <button className="w-[104px] border-r border-[#888]">modelo HIS EVAJ - 3</button>
        <button className="w-[97px] border-r border-[#888]">modelo HIS JOVEN</button>
        <button aria-label="Hoja nueva" className="ml-5">
          <svg width="13" height="13" viewBox="0 0 13 13" fill="none" stroke="currentColor"><circle cx="6.500" cy="6.500" r="5.500" /><path d="M6.500 3.500v6M3.500 6.500h6" strokeWidth="1.500" /></svg>
        </button>
        <span className="ml-auto text-[9px]">⋮</span>
        <div className="ml-2 flex w-[497px] items-center bg-[#333] text-[6px] text-[#888]">
          <span className="w-[10px] text-center">◂</span>
          <span className="h-[9px] w-[466px] bg-[#515151]" />
          <span className="ml-auto">▸</span>
        </div>
      </div>
      <div className="flex h-[17px] items-center bg-[#2f2f2f] text-[9px] text-[#e6e6e6]">
        <span className="-ml-5 w-[51px] font-medium">Modificar</span>
        <svg width="11" height="10" viewBox="0 0 11 10" fill="none" stroke="#bbb"><path d="M.5.5h9v8h-9zM.5 2.500h9M3.500.5v8" /><circle cx="8" cy="6.500" r="2" fill="#ddd" /></svg>
        <div className="mr-1 ml-auto flex items-center gap-4 text-[#666]">
          <svg width="10" height="9" viewBox="0 0 10 9" fill="none" stroke="currentColor"><path d="M.5.5h9v8h-9zM3.500.5v8M6.500.5v8M.5 3.500h9M.5 6h9" /></svg>
          <svg width="10" height="9" viewBox="0 0 10 9" fill="none" stroke="currentColor"><path d="M0 .5h10M1.500 1v8M8.500 1v8M3.500 3v5M6.500 3v5" /></svg>
          <svg width="10" height="9" viewBox="0 0 10 9" fill="none" stroke="currentColor"><path d="M.5.5h9v8h-9zM3.500.5v5M6.500.5v5h-6" /></svg>
        </div>
        <div className="ml-2 flex w-[102px] items-center gap-1 text-[#ddd]">
          <span>−</span>
          <input type="range" aria-label="Zoom" className="h-px w-[69px] appearance-none bg-[#ddd] [&::-webkit-slider-thumb]:h-[6px] [&::-webkit-slider-thumb]:w-[2px] [&::-webkit-slider-thumb]:appearance-none [&::-webkit-slider-thumb]:bg-white" />
          <span>+</span>
        </div>
      </div>
      <div className="flex h-[5px] items-end overflow-hidden bg-[#151515]">
        <span className="ml-[351px] h-[5px] w-[32px] bg-[#3c3c3c]" />
        <time className="mr-8 ml-auto h-[3px] text-[8px] leading-[8px] text-[#e6e6e6]">18:42</time>
      </div>
    </footer>
  );
}

export default function App() {
  return (
    <div className="flex h-screen flex-col overflow-hidden bg-[#212121] font-['Open_Sans','Noto_Sans',sans-serif]">
      <TitleBar />
      <Tabs />
      <Ribbon />
      <FormulaBar />
      <Sheet />
      <Footer />
    </div>
  );
}
